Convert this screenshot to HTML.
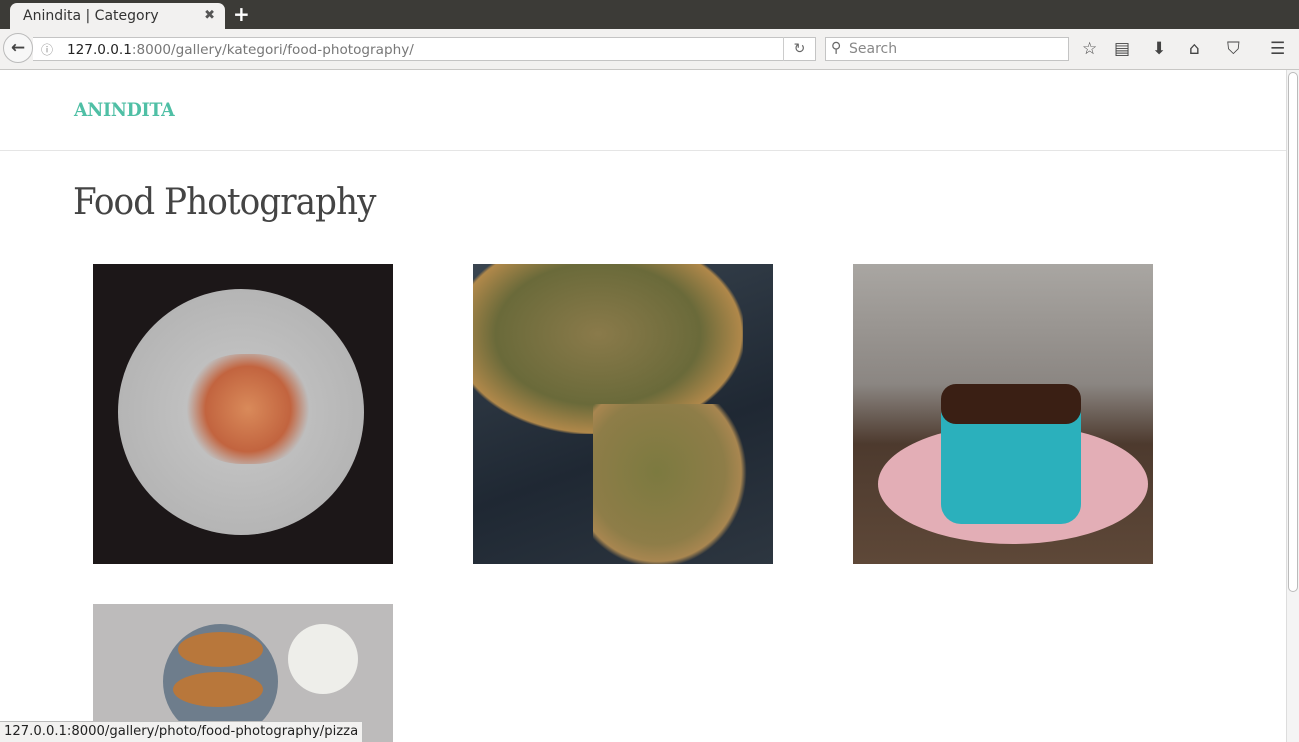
<!DOCTYPE html>
<html><head><meta charset="utf-8"><style>
*{margin:0;padding:0;box-sizing:border-box}
body{width:1299px;height:742px;overflow:hidden;background:#fff;font-family:"Liberation Sans",sans-serif;position:relative}
.tabbar{position:absolute;left:0;top:0;width:1299px;height:29px;background:#3c3b37}
.tab{position:absolute;left:10px;top:3px;width:215px;height:27px;background:#f2f1f0;border-radius:7px 7px 0 0;font:14px "DejaVu Sans",sans-serif;color:#333;padding:5px 0 0 13px}
.tab .x{position:absolute;right:10px;top:5px;font-size:13px;color:#555}
.plus{position:absolute;left:233px;top:2px;color:#fff;font:bold 20px "DejaVu Sans",sans-serif}
.nav{position:absolute;left:0;top:29px;width:1299px;height:41px;background:#f2f1f0;border-bottom:1px solid #c8c7c5}
.back{position:absolute;left:3px;top:4px;width:30px;height:30px;border:1px solid #bbb;border-radius:50%;background:#f7f7f7;text-align:center;font:bold 17px "DejaVu Sans";color:#444;line-height:28px}
.url{position:absolute;left:33px;top:8px;width:783px;height:24px;background:#fff;border:1px solid #c4c4c4;border-left:none;font:13.6px "DejaVu Sans",sans-serif;color:#777;padding:4px 0 0 34px}
.url b{font-weight:normal;color:#222}
.url .i{position:absolute;left:8px;top:3px;font-size:12px;color:#888}
.url .rl{position:absolute;right:0;top:-1px;width:32px;height:24px;border-left:1px solid #ccc;text-align:center;color:#666;font-size:14px;line-height:24px}
.search{position:absolute;left:825px;top:8px;width:244px;height:24px;background:#fff;border:1px solid #c4c4c4;font:14px "DejaVu Sans",sans-serif;color:#888;padding:3px 0 0 23px}
.ic{position:absolute;top:10px;font:17px "DejaVu Sans";color:#444}
.page{position:absolute;left:0;top:70px;width:1286px;height:672px}
.sb{position:absolute;left:1286px;top:70px;width:13px;height:672px;background:#f4f4f4;border-left:1px solid #ddd}
.sb div{position:absolute;left:1px;top:2px;width:10px;height:520px;background:#fff;border:1px solid #bbb;border-radius:5px}
.logo{position:absolute;left:74px;top:29px;font:bold 19px "DejaVu Serif",serif;color:#4fbfa5;letter-spacing:-.3px;transform:scaleX(.92);transform-origin:left}
.hr{position:absolute;left:0;top:80px;width:1286px;height:1px;background:#e5e5e5}
h1{position:absolute;left:73px;top:112px;font:normal 36px "DejaVu Serif",serif;color:#444;letter-spacing:-1px;transform:scaleX(.95);transform-origin:left}
.img{position:absolute;width:300px;height:300px;overflow:hidden}
.status{position:absolute;left:0;top:721px;height:21px;background:#f2f1f0;border:1px solid #bbb;border-left:none;border-bottom:none;font:13.2px "DejaVu Sans",sans-serif;color:#222;padding:2px 4px 0 4px}
</style></head><body>
<div class="tabbar"><div class="tab">Anindita | Category<span class="x">✖</span></div><div class="plus">+</div></div>
<div class="nav">
<div class="back">←</div>
<div class="url"><span class="i">ⓘ</span><b>127.0.0.1</b>:8000/gallery/kategori/food-photography/<span class="rl">↻</span></div>
<div class="search"><span style="position:absolute;left:5px;top:2px;color:#666">⚲</span>Search</div>
<span class="ic" style="left:1082px">☆</span>
<span class="ic" style="left:1114px">▤</span>
<span class="ic" style="left:1152px">⬇</span>
<span class="ic" style="left:1189px">⌂</span>
<span class="ic" style="left:1227px">⛉</span>
<span class="ic" style="left:1270px">☰</span>
</div>
<div class="page">
<div class="logo">ANINDITA</div>
<div class="hr"></div>
<h1>Food Photography</h1>
<div class="img" style="left:93px;top:194px;background:#1c1718">
<div style="position:absolute;left:25px;top:25px;width:246px;height:246px;border-radius:50%;background:radial-gradient(circle,#c9c9c9 0,#b5b5b5 70%,#9a9a9a 100%)"></div>
<div style="position:absolute;left:90px;top:90px;width:130px;height:110px;border-radius:45%;background:radial-gradient(circle,#d98a5a 0,#c2643f 50%,transparent 72%)"></div>
</div>
<div class="img" style="left:473px;top:194px;background:linear-gradient(160deg,#3a4550,#1f2833 60%,#2d3640)">
<div style="position:absolute;left:-20px;top:-30px;width:290px;height:200px;background:radial-gradient(ellipse,#8a7a4a 0,#6a6a3a 50%,#b0884a 70%,transparent 72%)"></div>
<div style="position:absolute;left:120px;top:140px;width:160px;height:170px;background:radial-gradient(ellipse at 40% 40%,#7c7a40 0,#8e7d48 50%,#a88650 62%,transparent 66%)"></div>
</div>
<div class="img" style="left:853px;top:194px;background:linear-gradient(180deg,#a9a6a2 0,#8b8682 40%,#4d3a2e 60%,#5e4838 100%)">
<div style="position:absolute;left:25px;top:160px;width:270px;height:120px;border-radius:50%;background:#e3aeb6"></div>
<div style="position:absolute;left:88px;top:130px;width:140px;height:130px;border-radius:20px;background:#2bb0bc"></div>
<div style="position:absolute;left:88px;top:120px;width:140px;height:40px;border-radius:15px;background:#3a1f14"></div>
</div>
<div class="img" style="left:93px;top:534px;height:138px;background:#bdbbbb">
<div style="position:absolute;left:70px;top:20px;width:115px;height:115px;border-radius:50%;background:#6e7d8c"></div>
<div style="position:absolute;left:85px;top:28px;width:85px;height:35px;border-radius:50%;background:#b8773b"></div>
<div style="position:absolute;left:80px;top:68px;width:90px;height:35px;border-radius:50%;background:#b8773b"></div>
<div style="position:absolute;left:195px;top:20px;width:70px;height:70px;border-radius:50%;background:#eeeeea"></div>
</div>
</div>
<div class="sb"><div></div></div>
<div class="status">127.0.0.1:8000/gallery/photo/food-photography/pizza</div>
</body></html>
